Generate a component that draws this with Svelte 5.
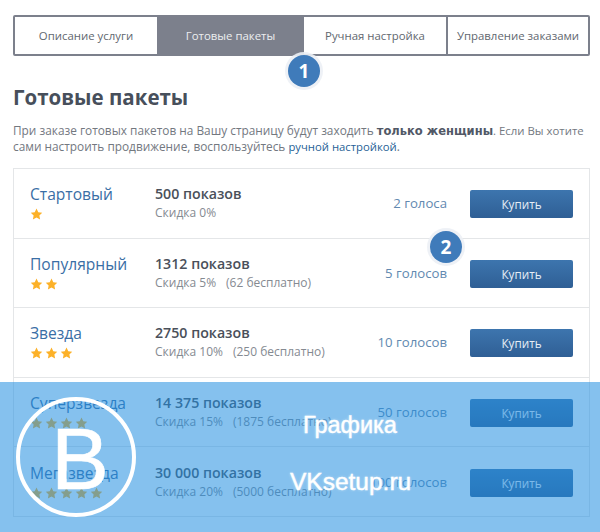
<script>
  const tabs = [
    { label: "Описание услуги" },
    { label: "Готовые пакеты", active: true },
    { label: "Ручная настройка" },
    { label: "Управление заказами" },
  ];

  const packages = [
    { name: "Стартовый", stars: 1, views: "500 показов", discount: "Скидка 0%", free: "", votes: "2 голоса" },
    { name: "Популярный", stars: 2, views: "1312 показов", discount: "Скидка 5%", free: "(62 бесплатно)", votes: "5 голосов" },
    { name: "Звезда", stars: 3, views: "2750 показов", discount: "Скидка 10%", free: "(250 бесплатно)", votes: "10 голосов" },
    { name: "Суперзвезда", stars: 4, views: "14 375 показов", discount: "Скидка 15%", free: "(1875 бесплатно)", votes: "50 голосов" },
    { name: "Мегазвезда", stars: 5, views: "30 000 показов", discount: "Скидка 20%", free: "(5000 бесплатно)", votes: "100 голосов" },
  ];
</script>

<div class="page">
  <nav class="tabs">
    {#each tabs as tab}
      <button type="button" class="tab" class:active={tab.active}>{tab.label}</button>
    {/each}
  </nav>

  <h1>Готовые пакеты</h1>
  <p class="intro">
    При заказе готовых пакетов на Вашу страницу будут заходить <b>только женщины</b><span class="tail">. Если Вы хотите</span><br />
    сами настроить продвижение, воспользуйтесь <a href="#manual">ручной настройкой</a>.
  </p>

  <div class="list">
    {#each packages as item}
      <div class="row">
        <div class="title">
          <a href="#pack">{item.name}</a>
          <div class="stars">
            {#each Array(item.stars) as _}
              <svg width="13" height="12" viewBox="0 0 24 23">
                <path d="M12 1l3.4 7 7.6 1-5.5 5.3 1.4 7.7-6.9-3.7L5.1 22l1.4-7.7L1 9l7.6-1z" />
              </svg>
            {/each}
          </div>
        </div>
        <div class="info">
          <strong>{item.views}</strong>
          <span>{item.discount}{#if item.free}<i>{item.free}</i>{/if}</span>
        </div>
        <div class="votes">{item.votes}</div>
        <button type="button" class="buy">Купить</button>
      </div>
    {/each}
  </div>

  <div class="badge one">1</div>
  <div class="badge two">2</div>

  <div class="overlay">
    <div class="logo">B</div>
    <div class="wm grafika">Графика</div>
    <div class="wm site">VKsetup.ru</div>
  </div>
</div>

<style>
  :global(body) {
    margin: 0;
    background: #fff;
  }

  .page {
    position: relative;
    box-sizing: border-box;
    width: 600px;
    height: 532px;
    padding: 15px 10px 0 13px;
    overflow: hidden;
    font-family: "Open Sans", sans-serif;
    color: #73787f;
  }

  .tabs {
    display: grid;
    grid-template-columns: 142px 145px 144px 1fr;
    height: 41px;
    box-sizing: border-box;
    border: 2px solid #7c808c;
    border-radius: 2px;
  }

  .tab {
    border: 0;
    border-left: 2px solid #7c808c;
    padding: 0;
    background: #fff;
    color: #62676f;
    font: 11.4px "Open Sans", sans-serif;
  }

  .tab:first-child {
    border-left: 0;
  }

  .tab.active {
    background: #7c808c;
    color: #eceef0;
  }

  h1 {
    margin: 28px 0 0;
    color: #474f5b;
    font-size: 20.5px;
    line-height: 27px;
    font-weight: 700;
  }

  .intro {
    margin: 11px 0 0;
    font-size: 11.85px;
    line-height: 16px;
    white-space: nowrap;
  }

  .intro b {
    color: #515866;
    font-family: "DejaVu Sans", sans-serif;
    font-size: 11.5px;
    line-height: 1;
  }

  .tail {
    font-size: 11.4px;
    line-height: 1;
  }

  .intro a {
    color: #1f5f96;
    font-size: 11.3px;
    line-height: 1;
    text-decoration: none;
  }

  .list {
    margin-top: 14px;
    border: 1px solid #e4e6e8;
    border-width: 1px 1px 0;
  }

  .row {
    display: grid;
    grid-template-columns: 125px 1fr 120px 104px;
    align-items: center;
    box-sizing: border-box;
    height: 69.6px;
    padding: 0 16px 0 16px;
    border-bottom: 1px solid #e4e6e8;
  }

  .title a {
    display: block;
    color: #3a6ea5;
    font-size: 15.6px;
    line-height: 20px;
    text-decoration: none;
  }

  .stars {
    display: flex;
    gap: 2px;
    height: 14px;
    margin-top: 4px;
  }

  .stars path {
    fill: #fcb128;
  }

  .info strong {
    display: block;
    color: #4a505a;
    font-size: 14.2px;
    line-height: 18px;
    font-weight: 600;
  }

  .info span {
    display: block;
    margin-top: 1px;
    color: #858a91;
    font-size: 12px;
    line-height: 17px;
  }

  .info i {
    margin-left: 10px;
    font-style: normal;
  }

  .votes {
    color: #6289b0;
    font-size: 13.2px;
    text-align: right;
    padding-right: 22px;
  }

  .buy {
    justify-self: end;
    width: 103px;
    height: 28px;
    margin-top: 2px;
    border: 0;
    border-radius: 2px;
    padding: 0;
    background: linear-gradient(#3d75ae, #2f5f95);
    color: #e6eef6;
    font: 11.7px "Open Sans", sans-serif;
  }

  .badge {
    position: absolute;
    width: 32px;
    height: 32px;
    border-radius: 50%;
    background: #3f7bba;
    box-shadow: 0 0 0 3px rgba(236, 240, 245, 0.9);
    color: #fff;
    font: 700 19px/32px "Open Sans", sans-serif;
    text-align: center;
  }

  .one {
    left: 288px;
    top: 55px;
  }

  .two {
    left: 430px;
    top: 231px;
  }

  .overlay {
    position: absolute;
    left: 0;
    right: 0;
    top: 382px;
    bottom: 0;
    background: rgba(33, 142, 224, 0.55);
  }

  .logo {
    position: absolute;
    left: 16px;
    top: 15px;
    box-sizing: border-box;
    width: 120px;
    height: 120px;
    padding-left: 8px;
    border: 4px solid #fff;
    border-radius: 50%;
    color: #fff;
    font: 400 87px/116px "Liberation Sans", sans-serif;
    -webkit-text-stroke: 0.6px #fff;
    text-align: center;
  }

  .wm {
    position: absolute;
    color: #fff;
    font-family: "Liberation Sans", sans-serif;
    -webkit-text-stroke: 0.4px #fff;
    text-shadow: 0 0 3px rgba(255, 255, 255, 0.5);
  }

  .grafika {
    left: 303px;
    top: 30px;
    font-size: 23.5px;
  }

  .site {
    left: 290px;
    top: 86px;
    font-size: 24.5px;
  }
</style>
